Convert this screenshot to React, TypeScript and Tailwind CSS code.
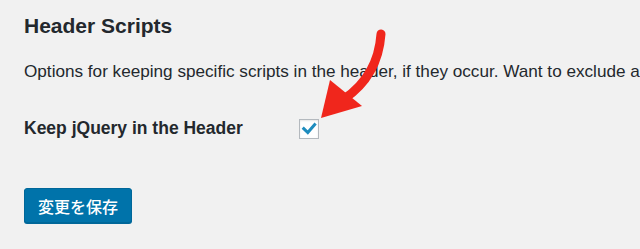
export default function App() {
  return (
    <div
      className="relative w-[640px] h-[249px] overflow-hidden bg-[#f1f1f1] px-6 pt-3 text-[#23282d]"
      style={{ fontFamily: '"Liberation Sans", "Noto Sans CJK JP", Arial, sans-serif' }}
    >
      <h2 className="text-[21px] leading-[28px] font-semibold">Header Scripts</h2>

      <p className="mt-[19px] text-[17.15px] leading-[24px] whitespace-nowrap">
        Options for keeping specific scripts in the header, if they occur. Want to exclude all
      </p>

      <div className="mt-[33px] flex items-center h-[24px]">
        <label className="w-[275px] shrink-0 text-[17.5px] leading-[24px] font-semibold">
          Keep jQuery in the Header
        </label>
        <span className="mt-[2px] flex h-[20px] w-[20px] items-center justify-center border border-[#b4b9be] bg-white shadow-[inset_0_1px_2px_rgba(0,0,0,0.1)]">
          <svg width="20" height="20" viewBox="0 0 20 20" className="shrink-0">
            <polyline
              points="3.7,8.6 8.8,13.6 16.6,4.6"
              fill="none"
              stroke="#1e8cbe"
              strokeWidth="3"
              strokeLinejoin="miter"
            />
          </svg>
        </span>
      </div>

      <button
        type="button"
        className="mt-[48px] flex h-[35px] w-[108px] items-center justify-center rounded-[3px] border border-[#006799] bg-[#0073aa] text-[16px] font-medium text-white shadow-[0_1px_0_#006799]"
        style={{ fontFamily: '"Noto Sans CJK JP", sans-serif' }}
      >
        変更を保存
      </button>

      {/* red annotation arrow */}
      <svg
        className="pointer-events-none absolute left-0 top-0"
        width="640"
        height="249"
        viewBox="0 0 640 249"
      >
        <path
          d="M381 34 Q 378 76 344 99"
          fill="none"
          stroke="#f0261c"
          strokeWidth="9"
          strokeLinecap="round"
        />
        <polygon points="321,118 330,80 362,106" fill="#f0261c" />
      </svg>
    </div>
  );
}
